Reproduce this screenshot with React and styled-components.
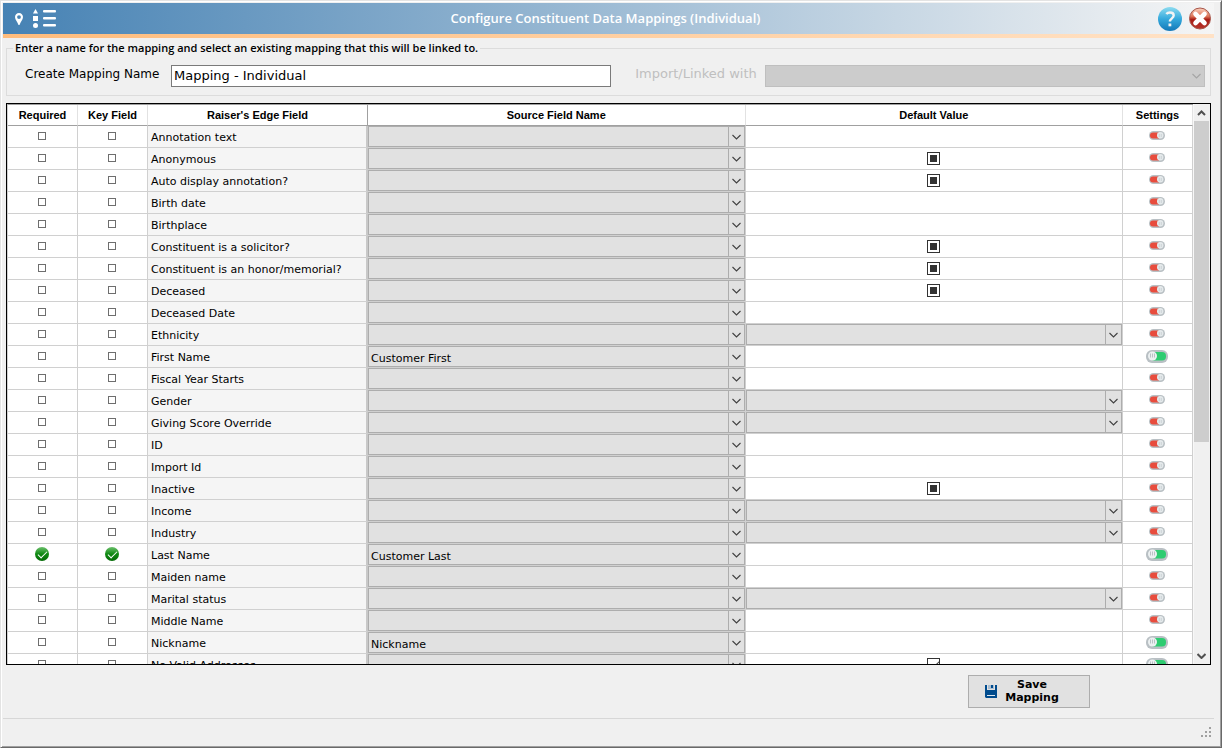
import React, {useState} from 'react';
import styled, {createGlobalStyle, css} from 'styled-components';

const verdana = '"DejaVu Sans", Verdana, sans-serif';
const segoe = '"Open Sans", "Segoe UI", sans-serif';
const arial = '"Liberation Sans", Arial, sans-serif';

const GlobalStyle = createGlobalStyle`
    * {
        box-sizing: border-box;
    }

    body {
        margin: 0;
        background: #f0f0f0;
        font-family: ${verdana};
        font-size: 11px;
        color: #000;
    }

    button, input, select {
        font: inherit;
        color: inherit;
        margin: 0;
    }
`;

const Window = styled.div`
    display: flex;
    flex-direction: column;
    height: 100vh;
    min-height: 320px;
    padding: 2px 7px 1px 2px;
    background: #f0f0f0;
    border-style: solid;
    border-width: 1px;
    border-color: #e3e3e3 #696969 #696969 #e3e3e3;
    box-shadow: inset 1px 1px 0 #fff, inset -1px -1px 0 #a0a0a0;
`;

const TitleBar = styled.header`
    flex: none;
    display: flex;
    align-items: center;
    height: 31px;
    background: linear-gradient(to right, #4682b4, #f5f5f5);
`;

const TitleIcons = styled.div`
    display: flex;
    align-items: center;
    gap: 9px;
    width: 80px;
    padding-left: 11px;
`;

const Title = styled.h1`
    flex: 1;
    margin: 0;
    padding-bottom: 2px;
    text-align: center;
    font-family: ${segoe};
    font-size: 13px;
    font-weight: 600;
    line-height: 16px;
    color: #fff;
`;

const TitleActions = styled.div`
    display: flex;
    justify-content: flex-end;
    gap: 6px;
    width: 86px;
    padding-right: 2px;
`;

const IconButton = styled.button`
    display: flex;
    padding: 0;
    border: 0;
    background: none;
    cursor: pointer;
`;

const Stripe = styled.div`
    flex: none;
    height: 4px;
    background: linear-gradient(to right, #ffbc7c, #ffe2c6);
`;

const MappingBox = styled.fieldset`
    flex: none;
    display: flex;
    align-items: center;
    margin: 2px 3px 7px;
    padding: 9px 5px 8px 18px;
    border: 1px solid #dcdcdc;
    min-width: 0;
`;

const Legend = styled.legend`
    margin-left: -12px;
    padding: 0 2px;
    font-family: ${segoe};
    font-size: 11px;
    font-weight: 600;
    line-height: 16px;
`;

const FieldLabel = styled.label`
    min-width: ${props => props.$disabled ? '120px' : '138px'};
    font-size: ${props => props.$disabled ? '13px' : '12px'};
    line-height: 16px;
    padding-bottom: 4px;
    white-space: nowrap;
    margin-right: 8px;
    color: ${props => props.$disabled ? '#bfbfbf' : '#000'};
`;

const NameField = styled.div`
    flex: 1;
    display: flex;
    min-width: 0;
    margin-right: 24px;
`;

const NameInput = styled.input`
    width: 100%;
    height: 22px;
    padding: 0 2px 1px;
    font-size: 13px;
    background: #fff;
    border: 1px solid #7a7a7a;
    outline: none;
`;

const SelectWrap = styled.div`
    position: relative;
    flex: 1;
    min-width: 0;
    height: ${props => props.$large ? '22px' : '21px'};
`;

const StyledSelect = styled.select`
    appearance: none;
    display: block;
    width: 100%;
    height: 100%;
    padding: 2px 18px 0 2px;
    border: 1px solid #adadad;
    border-radius: 0;
    background: #e1e1e1;
    outline: none;
    opacity: 1;

    ${props => props.disabled && css`
        background: #ccc;
        border-color: #bfbfbf;
    `}
`;

/* sits over the right end of the select */
const SelectArrow = styled.span`
    position: absolute;
    top: 1px;
    right: 1px;
    bottom: 1px;
    width: 16px;
    display: flex;
    align-items: center;
    justify-content: center;
    pointer-events: none;
    color: ${props => props.$disabled ? '#a5a5a5' : '#404040'};
    border-left: ${props => props.$disabled ? '0' : '1px solid #adadad'};
`;

const GridFrame = styled.section`
    flex: 1;
    display: flex;
    min-height: 0;
    margin: 0 3px;
    border: 1px solid #000;
    background: #fff;
`;

const GridScroll = styled.div`
    flex: 1;
    min-width: 0;
    overflow-y: auto;
    scrollbar-width: none;
    border-top: 1px solid #a0a0a0;
    border-left: 1px solid #d0d0d0;
`;

const Table = styled.table`
    width: 100%;
    table-layout: fixed;
    border-collapse: separate;
    border-spacing: 0;
`;

const Col = styled.col`
    width: ${props => props.$width};
`;

const Th = styled.th`
    height: 21px;
    padding: 0;
    background: #fff;
    border-right: 1px solid ${props => props.$dark ? '#a0a0a0' : '#e2e2e2'};
    border-bottom: 1px solid #a0a0a0;
    font-family: ${arial};
    font-size: 11px;
    line-height: 20px;
`;

const Td = styled.td`
    height: 22px;
    padding: 0;
    line-height: 20px;
    text-align: center;
    vertical-align: top;
    background: #fff;
    border-right: 1px solid #d0d0d0;
    border-bottom: 1px solid #d0d0d0;
`;

const NameTd = styled(Td)`
    padding: 3px 0 0 3px;
    line-height: 18px;
    text-align: left;
    white-space: nowrap;
    overflow: hidden;
    background: #f5f5f5;
    border-right: 2px solid #c8c8c8;
`;

const CellCenter = styled.div`
    display: flex;
    align-items: center;
    justify-content: center;
    height: 21px;
    padding: 0 1px 1px 0;
`;

const SmallCheck = styled.input`
    appearance: none;
    flex: none;
    position: relative;
    width: 8px;
    height: 8px;
    border: 1px solid #6e6e6e;
    background: #fff;

    &:checked {
        width: 14px;
        height: 14px;
        border: 0;
        border-radius: 50%;
        background: linear-gradient(#6cc06c, #0f8a12 50%, #046a06);
    }

    &:checked::after {
        content: '';
        position: absolute;
        left: 5px;
        top: 2px;
        width: 4px;
        height: 8px;
        border: solid #fff;
        border-width: 0 1px 1px 0;
        transform: rotate(45deg);
    }
`;

const TriCheck = styled.input`
    appearance: none;
    flex: none;
    position: relative;
    width: 13px;
    height: 13px;
    border: 1px solid #333;
    background: #fff;

    &:indeterminate {
        background: #333;
        box-shadow: inset 0 0 0 2px #fff;
    }

    &:checked::after {
        content: '';
        position: absolute;
        left: 4px;
        top: 0;
        width: 4px;
        height: 8px;
        border: solid #333;
        border-width: 0 1px 1px 0;
        transform: rotate(45deg);
    }
`;

const ScrollBar = styled.div`
    flex: none;
    display: flex;
    flex-direction: column;
    width: 17px;
    border-left: 1px solid #f8f8f8;
    background: #f0f0f0;
`;

const ScrollButton = styled.button`
    display: flex;
    align-items: center;
    justify-content: center;
    height: 17px;
    padding: 0 2px 0 0;
    border: 0;
    background: #f0f0f0;
    color: #505050;
`;

const ScrollTrack = styled.div`
    flex: 1;
`;

const ScrollThumb = styled.div`
    height: 61%;
    margin-right: 1px;
    background: #cdcdcd;
`;

const Actions = styled.div`
    flex: none;
    display: flex;
    justify-content: flex-end;
    padding: 10px 124px 10px 0;
`;

const SaveButton = styled.button`
    display: flex;
    align-items: center;
    gap: 8px;
    width: 122px;
    height: 33px;
    padding: 0 0 1px 16px;
    background: #e1e1e1;
    border: 1px solid #adadad;
    font-weight: bold;
    line-height: 13px;
    text-align: center;
    cursor: pointer;
`;

const SaveText = styled.span`
    width: 54px;
`;

const StatusBar = styled.footer`
    flex: none;
    display: flex;
    align-items: flex-start;
    justify-content: flex-end;
    height: 28px;
    padding: 8px 2px 0 0;
    border-top: 1px solid #d7d7d7;
`;

const PinIcon = () => (
    <svg width="10" height="14" viewBox="0 0 10 14">
        <path fill="#fff" fillRule="evenodd"
              d="M5 1C2.600 1 1 2.700 1 5c0 2.700 2.400 4.500 3.500 8h1C6.600 9.500 9 7.700 9 5c0-2.300-1.600-4-4-4zm0 2.200a1.900 1.900 0 110 3.800 1.900 1.900 0 010-3.800z"/>
    </svg>
);

const ListIcon = () => (
    <svg width="23" height="20" viewBox="0 0 23 20">
        <g fill="#fff">
            <path d="M2.500 0L5 4.500H0z"/>
            <rect x="0" y="7" width="5" height="5"/>
            <circle cx="2.500" cy="16.500" r="2.500"/>
            <rect x="10" y="1" width="13" height="2.500" rx="1"/>
            <rect x="10" y="8" width="13" height="2.500" rx="1"/>
            <rect x="10" y="15" width="13" height="2.500" rx="1"/>
        </g>
    </svg>
);

const HelpIcon = () => (
    <svg width="24" height="24" viewBox="0 0 24 24">
        <defs>
            <linearGradient id="help" x1="0" y1="0" x2="0" y2="1">
                <stop offset="0" stopColor="#8ddcf0"/>
                <stop offset=".5" stopColor="#35a9dc"/>
                <stop offset="1" stopColor="#1378b8"/>
            </linearGradient>
        </defs>
        <circle cx="12" cy="12" r="12" fill="url(#help)"/>
        <path d="M8.300 7C9.300 5.800 10.700 5.500 12 5.500c2.300 0 3.700 1.100 3.700 3 0 2.700-3.800 3-3.800 6.100"
              fill="none" stroke="#f4f4f4" strokeWidth="2.400"/>
        <rect x="10.500" y="16.500" width="2.800" height="2.800" fill="#f4f4f4"/>
    </svg>
);

const CloseIcon = () => (
    <svg width="24" height="24" viewBox="0 0 24 24">
        <defs>
            <linearGradient id="close" x1="0" y1="0" x2="0" y2="1">
                <stop offset="0" stopColor="#fbd3c0"/>
                <stop offset=".4" stopColor="#dd7458"/>
                <stop offset=".55" stopColor="#a81c14"/>
                <stop offset="1" stopColor="#b8352c"/>
            </linearGradient>
        </defs>
        <circle cx="12" cy="11.500" r="10.500" fill="url(#close)" stroke="#a8564a"/>
        <path d="M7.500 7l9 9M16.500 7l-9 9" stroke="#fff" strokeWidth="4.600" strokeLinecap="round"/>
    </svg>
);

const SaveIcon = () => (
    <svg width="12" height="13" viewBox="0 0 12 13">
        <path fill="#004b8d" d="M0 0h2v5h8V0h2v13H1l-1-1z"/>
        <rect x="3" y="0" width="6" height="4" fill="#a9bdd0"/>
        <rect x="6" y="0" width="2" height="3" fill="#004b8d"/>
        <rect x="2" y="10" width="8" height="1" fill="#dfe7ee"/>
    </svg>
);

const ToggleOff = () => (
    <svg width="16" height="10" viewBox="0 0 16 10">
        <rect width="16" height="9" rx="4.500" fill="#b9c0c4"/>
        <path d="M4 1.500h6v6H4a3 3 0 010-6z" fill="#e84c3d"/>
        <circle cx="11.200" cy="4.300" r="3.200" fill="#e4e9eb"/>
        <path d="M10.300 3v3M12.300 3v3" stroke="#c3cacd" strokeWidth=".7"/>
    </svg>
);

const ToggleOn = () => (
    <svg width="22" height="13" viewBox="0 0 22 13">
        <rect width="22" height="13" rx="6" fill="#b9c0c4"/>
        <rect x="4" y="2" width="16" height="8.500" rx="4" fill="#2ecc71"/>
        <circle cx="6.500" cy="6" r="4.500" fill="#ecf0f1"/>
        <path d="M4.500 3.500v4M6.500 3.500v4M8.500 3.500v4" stroke="#b4bcc0" strokeWidth=".9"/>
    </svg>
);

const Chevron = ({up, bold}) => (
    <svg width="9" height="6" viewBox="0 0 9 6">
        <path d={up ? 'M1 5l3.500-3.500L8 5' : 'M.5 1l4 4 4-4'}
              fill="none" stroke="currentColor" strokeWidth={bold ? 2 : 1.1}/>
    </svg>
);

const Grip = () => (
    <svg width="11" height="11" viewBox="0 0 11 11">
        <path fill="#a0a0a0" d="M8 0h2v2H8zM4 4h2v2H4zM8 4h2v2H8zM0 8h2v2H0zM4 8h2v2H4zM8 8h2v2H8z"/>
    </svg>
);

const Combo = ({id, label, value = '', disabled, large}) => (
    <SelectWrap $large={large}>
        <StyledSelect id={id} aria-label={label} defaultValue={value} disabled={disabled}>
            <option value=""></option>
            {value && <option value={value}>{value}</option>}
        </StyledSelect>
        <SelectArrow $disabled={disabled}><Chevron/></SelectArrow>
    </SelectWrap>
);

const setMixed = el => {
    if (el) el.indeterminate = true;
};

const DefaultValue = ({type, name}) => {
    const label = `${name} default value`;

    if (type === 'select') return <Combo label={label}/>;
    if (type === 'mixed') return <CellCenter><TriCheck type="checkbox" ref={setMixed} aria-label={label}/></CellCenter>;
    if (type === 'checked') return <CellCenter><TriCheck type="checkbox" defaultChecked aria-label={label}/></CellCenter>;
    return null;
};

const rows = [
    {name: 'Annotation text'},
    {name: 'Anonymous', type: 'mixed'},
    {name: 'Auto display annotation?', type: 'mixed'},
    {name: 'Birth date'},
    {name: 'Birthplace'},
    {name: 'Constituent is a solicitor?', type: 'mixed'},
    {name: 'Constituent is an honor/memorial?', type: 'mixed'},
    {name: 'Deceased', type: 'mixed'},
    {name: 'Deceased Date'},
    {name: 'Ethnicity', type: 'select'},
    {name: 'First Name', source: 'Customer First', on: true},
    {name: 'Fiscal Year Starts'},
    {name: 'Gender', type: 'select'},
    {name: 'Giving Score Override', type: 'select'},
    {name: 'ID'},
    {name: 'Import Id'},
    {name: 'Inactive', type: 'mixed'},
    {name: 'Income', type: 'select'},
    {name: 'Industry', type: 'select'},
    {name: 'Last Name', source: 'Customer Last', on: true, required: true},
    {name: 'Maiden name'},
    {name: 'Marital status', type: 'select'},
    {name: 'Middle Name'},
    {name: 'Nickname', source: 'Nickname', on: true},
    {name: 'No Valid Addresses', type: 'checked', on: true},
];

const MappingRow = ({name, source, type, on, required}) => {
    const [active, setActive] = useState(!!on);

    return (
        <tr>
            <Td>
                <CellCenter>
                    <SmallCheck type="checkbox" defaultChecked={required} aria-label={`${name} required`}/>
                </CellCenter>
            </Td>
            <Td>
                <CellCenter>
                    <SmallCheck type="checkbox" defaultChecked={required} aria-label={`${name} key field`}/>
                </CellCenter>
            </Td>
            <NameTd>{name}</NameTd>
            <Td><Combo label={`${name} source field`} value={source}/></Td>
            <Td><DefaultValue type={type} name={name}/></Td>
            <Td>
                <CellCenter>
                    <IconButton type="button" aria-label={`${name} settings`} aria-pressed={active}
                                onClick={() => setActive(!active)}>
                        {active ? <ToggleOn/> : <ToggleOff/>}
                    </IconButton>
                </CellCenter>
            </Td>
        </tr>
    );
};

const MappingGrid = () => (
    <GridFrame>
        <GridScroll>
            <Table>
                <colgroup>
                    <Col $width="70px"/>
                    <Col $width="70px"/>
                    <Col $width="220px"/>
                    <Col/>
                    <Col/>
                    <Col $width="70px"/>
                </colgroup>
                <thead>
                    <tr>
                        <Th>Required</Th>
                        <Th>Key Field</Th>
                        <Th $dark>Raiser's Edge Field</Th>
                        <Th>Source Field Name</Th>
                        <Th>Default Value</Th>
                        <Th>Settings</Th>
                    </tr>
                </thead>
                <tbody>
                    {rows.map(row => <MappingRow key={row.name} {...row}/>)}
                </tbody>
            </Table>
        </GridScroll>
        <ScrollBar>
            <ScrollButton type="button" aria-label="Scroll up"><Chevron up bold/></ScrollButton>
            <ScrollTrack><ScrollThumb/></ScrollTrack>
            <ScrollButton type="button" aria-label="Scroll down"><Chevron bold/></ScrollButton>
        </ScrollBar>
    </GridFrame>
);

const App = () => (
    <>
        <GlobalStyle/>
        <Window>
            <TitleBar>
                <TitleIcons><PinIcon/><ListIcon/></TitleIcons>
                <Title>Configure Constituent Data Mappings (Individual)</Title>
                <TitleActions>
                    <IconButton type="button" aria-label="Help"><HelpIcon/></IconButton>
                    <IconButton type="button" aria-label="Close"><CloseIcon/></IconButton>
                </TitleActions>
            </TitleBar>
            <Stripe/>
            <MappingBox>
                <Legend>Enter a name for the mapping and select an existing mapping that this will be linked to.</Legend>
                <FieldLabel htmlFor="mapping-name">Create Mapping Name</FieldLabel>
                <NameField>
                    <NameInput id="mapping-name" type="text" defaultValue="Mapping - Individual"/>
                </NameField>
                <FieldLabel htmlFor="linked-with" $disabled>Import/Linked with</FieldLabel>
                <Combo id="linked-with" disabled large/>
            </MappingBox>
            <MappingGrid/>
            <Actions>
                <SaveButton type="button">
                    <SaveIcon/>
                    <SaveText>Save Mapping</SaveText>
                </SaveButton>
            </Actions>
            <StatusBar><Grip/></StatusBar>
        </Window>
    </>
);

export default App;
